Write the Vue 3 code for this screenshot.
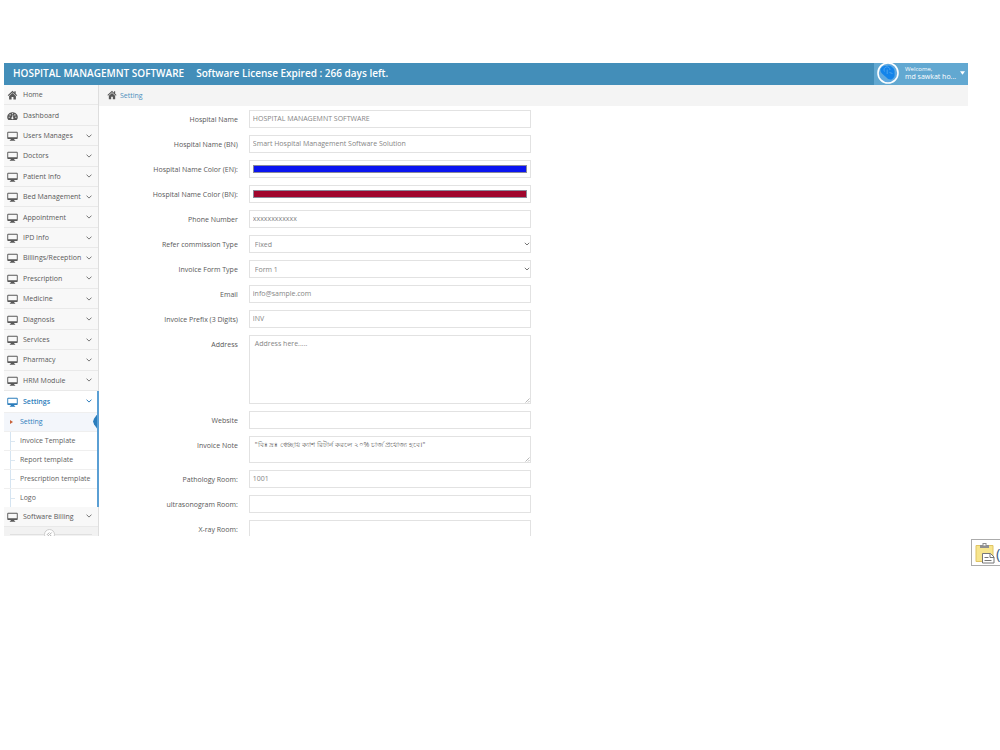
<script setup>
import { ref } from 'vue'

const menu = [
  { name: 'Home', icon: 'home' },
  { name: 'Dashboard', icon: 'dash' },
  { name: 'Users Manages', sub: true },
  { name: 'Doctors', sub: true },
  { name: 'Patient Info', sub: true },
  { name: 'Bed Management', sub: true },
  { name: 'Appointment', sub: true },
  { name: 'IPD Info', sub: true },
  { name: 'Billings/Reception', sub: true },
  { name: 'Prescription', sub: true },
  { name: 'Medicine', sub: true },
  { name: 'Diagnosis', sub: true },
  { name: 'Services', sub: true },
  { name: 'Pharmacy', sub: true },
  { name: 'HRM Module', sub: true },
  {
    name: 'Settings',
    sub: true,
    open: true,
    children: ['Setting', 'Invoice Template', 'Report template', 'Prescription template', 'Logo']
  },
  { name: 'Software Billing', sub: true }
]

const fields = ref([
  { id: 'name', label: 'Hospital Name', type: 'text', value: 'HOSPITAL MANAGEMNT SOFTWARE' },
  { id: 'name-bn', label: 'Hospital Name (BN)', type: 'text', value: 'Smart Hospital Management Software Solution' },
  { id: 'color-en', label: 'Hospital Name Color (EN):', type: 'color', value: '#0a14f0' },
  { id: 'color-bn', label: 'Hospital Name Color (BN):', type: 'color', value: '#a0052d' },
  { id: 'phone', label: 'Phone Number', type: 'text', value: 'xxxxxxxxxxxx' },
  { id: 'refer', label: 'Refer commission Type', type: 'select', value: 'Fixed', options: ['Fixed', 'Percentage'] },
  { id: 'form', label: 'Invoice Form Type', type: 'select', value: 'Form 1', options: ['Form 1', 'Form 2'] },
  { id: 'email', label: 'Email', type: 'text', value: 'info@sample.com' },
  { id: 'prefix', label: 'Invoice Prefix (3 Digits)', type: 'text', value: 'INV' },
  { id: 'address', label: 'Address', type: 'textarea', size: 'tall', value: 'Address here.....' },
  { id: 'website', label: 'Website', type: 'text', value: '' },
  { id: 'note', label: 'Invoice Note', type: 'textarea', size: 'short', value: '"বিঃ দ্রঃ স্বেচ্ছায় ক্যাশ রিটার্ন করলে ২০% চার্জ প্রযোজ্য হবে।"' },
  { id: 'pathology', label: 'Pathology Room:', type: 'text', value: '1001' },
  { id: 'ultra', label: 'ultrasonogram Room:', type: 'text', value: '' },
  { id: 'xray', label: 'X-ray Room:', type: 'text', value: '' }
])
</script>

<template>
  <div class="page">
    <div class="app">
      <header class="navbar">
        <a href="#" class="brand">HOSPITAL MANAGEMNT SOFTWARE</a>
        <span class="license">Software License Expired : 266 days left.</span>
        <button type="button" class="user">
          <svg class="avatar" viewBox="0 0 22 22">
            <circle cx="11" cy="11" r="10" fill="#5fa9e0" stroke="#fff" stroke-width="1.6" />
            <path d="M3.500 7Q6 3 9.500 4Q13 2.500 15.500 5.500Q18 7 17.500 11Q18.500 15 14.500 17.500Q11 18 9.500 15.500L6 12.500Q3 10 3.500 7Z" fill="#1384ea" />
            <path d="M7.500 9.500A3 3 0 1 1 13 8M10.200 7.500v4.500M12.500 10.500l3 1" fill="none" stroke="#4fa6ee" stroke-width="0.9" />
          </svg>
          <span class="user-text">
            <small>Welcome,</small>
            <span>md sawkat ho...</span>
          </span>
          <svg class="caret" viewBox="0 0 6 4"><path d="M0 0h6L3 4z" fill="#fff" /></svg>
        </button>
      </header>

      <div class="body">
        <nav class="sidebar">
          <ul class="menu">
            <li v-for="item in menu" :key="item.name" class="item" :class="{ open: item.open }">
              <a href="#" class="link">
                <svg v-if="item.icon === 'home'" class="icon" viewBox="0 0 12 12">
                  <path d="M6 2L.8 6.700l.8.900L6 3.700l4.400 3.900.8-.9-1.700-1.500V2.500H8v1.300z" />
                  <path d="M6 4.400L2.300 7.600V11.500h2.700V8.700h2v2.800h2.700V7.600z" />
                </svg>
                <svg v-else-if="item.icon === 'dash'" class="icon" viewBox="0 0 12 12">
                  <path fill-rule="evenodd" d="M6 2.500a5.200 5.200 0 0 0-4.500 8.500h9A5.200 5.200 0 0 0 6 2.500zM5.400 3.500h1.200v1.200H5.400zM2.800 4.700H4v1.200H2.800zM8 4.700h1.200v1.200H8zM1.800 7.300H3v1.200H1.800zM9 7.300h1.200v1.200H9zM6.200 5.500l.7.200-.4 2.300a1.100 1.100 0 1 1-.9-.2z" />
                </svg>
                <svg v-else class="icon" viewBox="0 0 12 12">
                  <path fill-rule="evenodd" d="M1.200 2h9.600q.9 0 .9.900v6q0 .9-.9.900H8v1h.9v.9H3.100v-.9H4v-1H1.200q-.9 0-.9-.9v-6q0-.9.9-.9zm.1 1v5h9.400V3z" />
                </svg>
                <span class="text">{{ item.name }}</span>
                <svg v-if="item.sub" class="arrow" viewBox="0 0 6 4"><path d="M.5.600L3 3.100 5.500.600" /></svg>
              </a>
              <ul v-if="item.children" class="submenu">
                <li v-for="(child, i) in item.children" :key="child" :class="{ active: i === 0 }">
                  <a href="#">{{ child }}</a>
                </li>
              </ul>
            </li>
          </ul>
          <div class="toggle-row">
            <button type="button" class="toggle" aria-label="Collapse menu">
              <svg viewBox="0 0 9 9"><path d="M4.300 2.500L2.300 4.500l2 2M6.700 2.500l-2 2 2 2" /></svg>
            </button>
          </div>
        </nav>

        <main class="main">
          <div class="breadcrumb">
            <svg class="icon" viewBox="0 0 12 12">
              <path d="M6 1L.5 6l.8.900L6 2.700l4.700 4.200.8-.9-1.700-1.500V1.500H8.400v1.700z" />
              <path d="M6 3.500L2.200 6.900V11h2.800V8h2v3h2.800V6.900z" />
            </svg>
            <a href="#">Setting</a>
          </div>

          <form class="form" @submit.prevent>
            <div v-for="f in fields" :key="f.id" class="row">
              <label :for="f.id">{{ f.label }}</label>
              <div class="field">
                <template v-if="f.type === 'select'">
                  <select :id="f.id" v-model="f.value" class="control">
                    <option v-for="o in f.options" :key="o">{{ o }}</option>
                  </select>
                  <svg class="select-arrow" viewBox="0 0 6 4"><path d="M.8.800L3 3 5.200.800" /></svg>
                </template>
                <template v-else-if="f.type === 'textarea'">
                  <textarea :id="f.id" v-model="f.value" class="control" :class="f.size"></textarea>
                  <svg class="grip" viewBox="0 0 5 5"><path d="M.5 4.500l4-4M3 4.500L4.500 3" /></svg>
                </template>
                <input v-else :id="f.id" v-model="f.value" :type="f.type" class="control" />
              </div>
            </div>
          </form>
        </main>
      </div>
    </div>

    <!-- paste options -->
    <button type="button" class="paste" aria-label="Paste options">
      <svg viewBox="0 0 20 22">
        <path d="M1 3.500h17v16H1z" fill="#f7e58d" stroke="#e0c463" />
        <path d="M5 6V3h2.500V1h4v2H14v3z" fill="#8f8f8f" />
        <path d="M8.500 2h2v1.500h-2z" fill="#fff" />
        <path d="M7.500 11.500h8l3.500 3.500v6H7.500z" fill="#fff" stroke="#777" />
        <path d="M15 11.500v4h4M9.500 15.500h4M9.500 18.500h7" fill="none" stroke="#777" />
      </svg>
      <span>(</span>
    </button>
  </div>
</template>

<style>
body {
  margin: 0;
  background: #fff;
}
</style>

<style scoped>
.page {
  display: flex;
  flex-direction: column;
  padding-top: 63px;
  overflow: hidden;
  font-family: 'Open Sans', 'Noto Sans', sans-serif;
  font-size: 7px;
  color: #585858;
}

.page * {
  box-sizing: border-box;
}

a {
  color: inherit;
  text-decoration: none;
}

button {
  font: inherit;
  padding: 0;
  border: 0;
  cursor: pointer;
}

ul {
  list-style: none;
  margin: 0;
  padding: 0;
}

.app {
  margin: 0 32px 0 4px;
}

.navbar {
  display: flex;
  align-items: center;
  height: 22px;
  padding-left: 9px;
  background: #438eb9;
  color: #fff;
  font-size: 10px;
  font-weight: 600;
}

.brand,
.license {
  padding-bottom: 2px;
}

.license {
  flex: 1;
  margin-left: 12px;
}

.user {
  display: flex;
  align-items: center;
  align-self: stretch;
  width: 94px;
  padding: 0 3px 2px;
  background: #62a8d1;
  color: #fff;
  font-size: 7px;
  font-weight: 400;
  line-height: 8px;
  text-align: left;
}

.avatar {
  width: 22px;
  height: 22px;
  overflow: visible;
}

.user-text {
  flex: 1;
  margin-left: 6px;
  white-space: nowrap;
}

.user-text small {
  display: block;
  font-size: 6px;
  line-height: 7px;
}

.caret {
  width: 5px;
  height: 4px;
}

.body {
  display: flex;
  height: 451px;
  overflow: hidden;
}

.sidebar {
  display: flex;
  flex-direction: column;
  width: 95px;
  background: #f2f2f2;
  border-right: 1px solid #dedede;
}

.menu {
  flex: 1;
  display: flex;
  flex-direction: column;
}

.item {
  flex: 1 0 auto;
  display: flex;
  flex-direction: column;
  background: #f8f8f8;
  border-bottom: 1px solid #e9e9e9;
}

.link {
  flex: 1;
  display: flex;
  align-items: center;
  min-height: 19px;
  padding: 0 6px 0 3px;
}

.icon {
  width: 11px;
  height: 11px;
  fill: #585858;
}

.text {
  flex: 1;
  margin-left: 5px;
}

.arrow,
.select-arrow {
  width: 6px;
  height: 4px;
  fill: none;
  stroke: #777;
}

.item.open {
  margin-right: -1px;
  background: #fff;
  border-right: 2px solid #5a9fd4;
  border-bottom: 0;
}

.open .link {
  min-height: 20px;
  padding-right: 5px;
  color: #2b7dbc;
  font-weight: 600;
}

.open .icon {
  fill: #2b7dbc;
}

.open .arrow {
  stroke: #2b7dbc;
}

.submenu {
  position: relative;
}

.submenu::before {
  content: '';
  position: absolute;
  top: 0;
  bottom: 0;
  left: 6px;
  border-left: 1px solid #d5e4f1;
}

.submenu li {
  position: relative;
  height: 19px;
  padding-left: 16px;
  border-top: 1px solid #efefef;
  line-height: 17px;
  color: #616161;
}

.submenu li::before {
  content: '';
  position: absolute;
  top: 9px;
  left: 7px;
  width: 4px;
  border-top: 1px solid #dbe7f1;
}

.submenu .active {
  background: #f3f6fb;
  color: #2b7dbc;
}

.submenu .active::before {
  top: 7px;
  left: 6px;
  width: 0;
  border: 2px solid transparent;
  border-left: 3px solid #c86139;
}

.submenu .active::after {
  content: '';
  position: absolute;
  top: 2px;
  right: 0;
  width: 4px;
  height: 14px;
  background: #2b7dbc;
  clip-path: polygon(100% 0, 25% 30%, 0 50%, 25% 70%, 100% 100%);
}

.toggle-row {
  display: flex;
  justify-content: center;
  height: 9px;
  padding: 2px 3px 0 0;
  background: linear-gradient(#e0e0e0, #e0e0e0) center 7px / 82px 1px no-repeat #f2f2f2;
}

.toggle {
  width: 11px;
  height: 11px;
  border: 1px solid #ccc;
  border-radius: 50%;
  background: #fff;
}

.toggle svg {
  display: block;
  width: 9px;
  height: 9px;
  fill: none;
  stroke: #999;
  stroke-width: 0.8;
}

.main {
  flex: 1;
  min-width: 0;
}

.breadcrumb {
  display: flex;
  align-items: center;
  height: 21px;
  padding: 0 0 1px 8px;
  background: #f4f4f4;
  color: #4c8fbd;
}

.breadcrumb .icon {
  width: 10px;
  height: 10px;
  margin-right: 3px;
}

.form {
  display: flex;
  flex-direction: column;
  gap: 7px;
  padding-top: 4px;
}

.row {
  display: grid;
  grid-template-columns: 2fr 4fr 6fr;
}

.row label {
  padding-right: 6px;
  line-height: 19px;
  text-align: right;
}

.field {
  position: relative;
  display: flex;
  align-items: flex-start;
  padding: 0 3px 0 5px;
}

.row label {
  height: 18px;
}

.control {
  display: block;
  width: 100%;
  height: 18px;
  margin: 0;
  padding: 0 3px 1px;
  border: 1px solid #e2e2e2;
  border-radius: 0;
  background: #fff;
  color: #858585;
  font: inherit;
  outline: none;
}

select.control {
  padding: 0 5px;
  appearance: none;
}

textarea.control {
  padding: 3px 5px;
  line-height: 10px;
  resize: none;
}

.control.tall {
  height: 69px;
}

.control.short {
  height: 27px;
  color: #696969;
}

input.control[type='color'] {
  padding: 4px 3px;
}

input[type='color']::-webkit-color-swatch-wrapper {
  padding: 0;
}

input[type='color']::-webkit-color-swatch {
  border: 1px solid #8a8a9a;
  border-radius: 0;
}

.select-arrow {
  position: absolute;
  top: 7px;
  right: 4px;
  pointer-events: none;
}

.grip {
  position: absolute;
  right: 4px;
  bottom: 1px;
  width: 5px;
  height: 5px;
  fill: none;
  stroke: #888;
  stroke-width: 0.6;
}

.paste {
  display: flex;
  align-items: center;
  align-self: flex-end;
  width: 29px;
  height: 27px;
  margin-top: 3px;
  padding-left: 3px;
  overflow: hidden;
  border: 1px solid #ababab;
  border-right: 0;
  background: #fff;
  color: #3f5f85;
  font-size: 15px;
}

.paste svg {
  flex: none;
  width: 20px;
  height: 22px;
  margin-right: 1px;
}
</style>
